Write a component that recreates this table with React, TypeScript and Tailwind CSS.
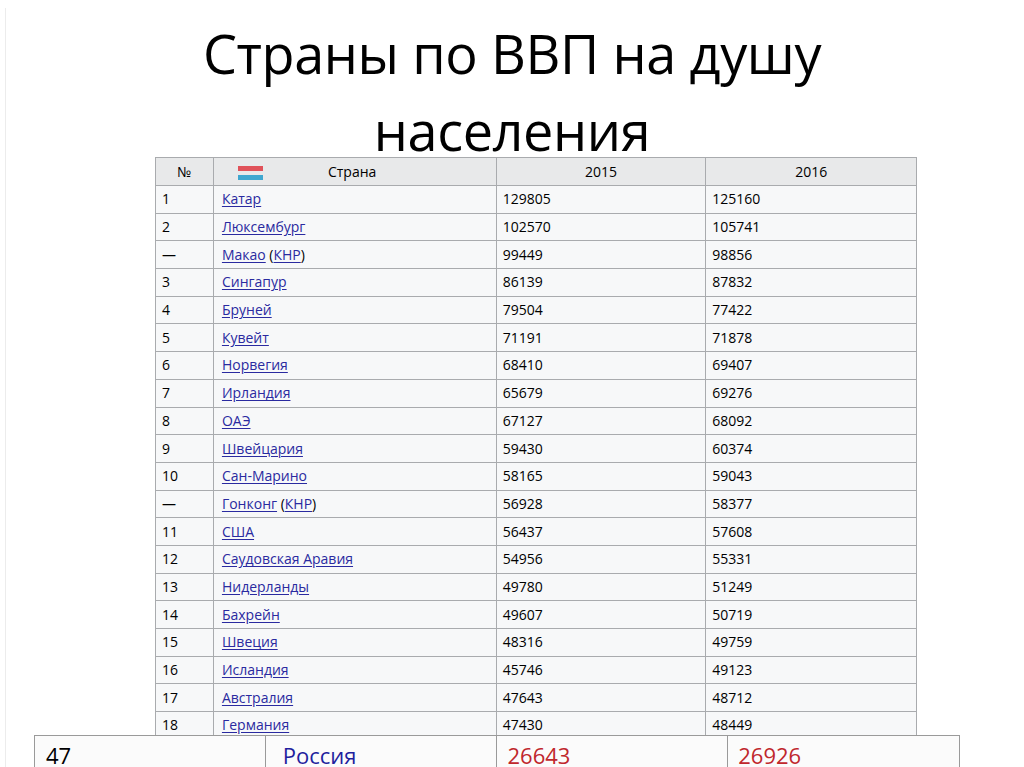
const rows: { n: string; name: string; extra?: boolean; y15: string; y16: string }[] = [
  { n: "1", name: "Катар", y15: "129805", y16: "125160" },
  { n: "2", name: "Люксембург", y15: "102570", y16: "105741" },
  { n: "—", name: "Макао", extra: true, y15: "99449", y16: "98856" },
  { n: "3", name: "Сингапур", y15: "86139", y16: "87832" },
  { n: "4", name: "Бруней", y15: "79504", y16: "77422" },
  { n: "5", name: "Кувейт", y15: "71191", y16: "71878" },
  { n: "6", name: "Норвегия", y15: "68410", y16: "69407" },
  { n: "7", name: "Ирландия", y15: "65679", y16: "69276" },
  { n: "8", name: "ОАЭ", y15: "67127", y16: "68092" },
  { n: "9", name: "Швейцария", y15: "59430", y16: "60374" },
  { n: "10", name: "Сан-Марино", y15: "58165", y16: "59043" },
  { n: "—", name: "Гонконг", extra: true, y15: "56928", y16: "58377" },
  { n: "11", name: "США", y15: "56437", y16: "57608" },
  { n: "12", name: "Саудовская Аравия", y15: "54956", y16: "55331" },
  { n: "13", name: "Нидерланды", y15: "49780", y16: "51249" },
  { n: "14", name: "Бахрейн", y15: "49607", y16: "50719" },
  { n: "15", name: "Швеция", y15: "48316", y16: "49759" },
  { n: "16", name: "Исландия", y15: "45746", y16: "49123" },
  { n: "17", name: "Австралия", y15: "47643", y16: "48712" },
  { n: "18", name: "Германия", y15: "47430", y16: "48449" },
];

function Link({ children }: { children: React.ReactNode }) {
  return <span className="text-[#2a2aa0] underline underline-offset-2">{children}</span>;
}

export default function App() {
  return (
    <div
      className="relative w-[1024px] h-[767px] overflow-hidden bg-white text-black"
      style={{ fontFamily: '"Open Sans", "Noto Sans", sans-serif' }}
    >
      <div className="absolute left-[5px] top-[8px] bottom-0 w-px bg-[#ececec]" />

      <h1 className="pt-[15px] text-center text-[54px] leading-[77px] tracking-[-0.4px]">
        Страны по ВВП на душу
        <br />
        населения
      </h1>

      <table className="ml-[155px] mt-[-12px] w-[762px] border-collapse text-[14px] leading-none">
        <colgroup>
          <col className="w-[58px]" />
          <col className="w-[283px]" />
          <col className="w-[210px]" />
          <col className="w-[211px]" />
        </colgroup>
        <thead>
          <tr className="h-[28px] bg-[#e8e9ea]">
            <th className="border border-[#a9abae] font-normal">№</th>
            <th className="border border-[#a9abae] font-normal">
              <div className="flex items-center">
                <div className="ml-[24px] flex h-[16px] w-[25px] flex-col justify-between pt-[2px]">
                  <div className="h-[5px] bg-[#e0525a]" />
                  <div className="h-[5px] bg-[#3fa7d0]" />
                </div>
                <span className="ml-[65px]">Страна</span>
              </div>
            </th>
            <th className="border border-[#a9abae] font-normal">2015</th>
            <th className="border border-[#a9abae] font-normal">2016</th>
          </tr>
        </thead>
        <tbody>
          {rows.map((r, i) => (
            <tr key={i} className="h-[27.7px] bg-[#f7f8f9]">
              <td className="border border-[#a9abae] pl-[6px]">{r.n}</td>
              <td className="border border-[#a9abae] pl-[8px]">
                <Link>{r.name}</Link>
                {r.extra ? (
                  <>
                    {" ("}
                    <Link>КНР</Link>
                    {")"}
                  </>
                ) : null}
              </td>
              <td className="border border-[#a9abae] pl-[6px]">{r.y15}</td>
              <td className="border border-[#a9abae] pl-[6px]">{r.y16}</td>
            </tr>
          ))}
        </tbody>
      </table>

      <table className="absolute left-[34px] top-[735px] w-[926px] border-collapse bg-[#fbfbfb] text-[22px] leading-none">
        <tbody>
          <tr className="h-[44px] align-top">
            <td className="w-[231px] border border-[#9a9a9a] pl-[11px] pt-[8px]">47</td>
            <td className="w-[232px] border border-[#9a9a9a] pl-[17px] pt-[8px] text-[#1f1f9e]">Россия</td>
            <td className="w-[231px] border border-[#9a9a9a] pl-[10px] pt-[8px] text-[#c0272d]">26643</td>
            <td className="w-[232px] border border-[#9a9a9a] pl-[10px] pt-[8px] text-[#c0272d]">26926</td>
          </tr>
        </tbody>
      </table>
    </div>
  );
}
